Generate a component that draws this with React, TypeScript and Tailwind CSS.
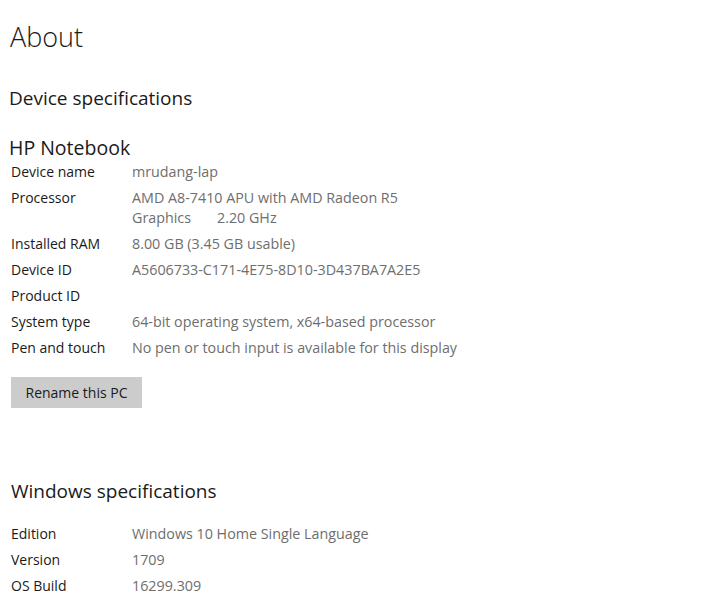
const font = { fontFamily: '"Open Sans", "Noto Sans", sans-serif' };

type Spec = { label: string; value: React.ReactNode };

const deviceSpecs: Spec[] = [
  { label: "Device name", value: "mrudang-lap" },
  {
    label: "Processor",
    value: (
      <>
        AMD A8-7410 APU with AMD Radeon R5
        <br />
        Graphics&nbsp;&nbsp;&nbsp;&nbsp;&nbsp;&nbsp;&nbsp;2.20 GHz
      </>
    ),
  },
  { label: "Installed RAM", value: "8.00 GB (3.45 GB usable)" },
  { label: "Device ID", value: "A5606733-C171-4E75-8D10-3D437BA7A2E5" },
  { label: "Product ID", value: "" },
  { label: "System type", value: "64-bit operating system, x64-based processor" },
  { label: "Pen and touch", value: "No pen or touch input is available for this display" },
];

const windowsSpecs: Spec[] = [
  { label: "Edition", value: "Windows 10 Home Single Language" },
  { label: "Version", value: "1709" },
  { label: "OS Build", value: "16299.309" },
];

function SpecList({ items }: { items: Spec[] }) {
  return (
    <div className="flex flex-col gap-[6px] pl-[11px]">
      {items.map((s) => (
        <div key={s.label} className="flex text-[14px] leading-[20px]">
          <div className="w-[121px] shrink-0 text-[#1a1a1a]">{s.label}</div>
          <div className="text-[#6e6e6e] text-[14.3px] min-h-[20px]">{s.value}</div>
        </div>
      ))}
    </div>
  );
}

export default function App() {
  return (
    <div className="w-[702px] h-[600px] bg-white overflow-hidden" style={font}>
      <h1 className="pl-[10px] pt-[19px] text-[27px] leading-[36px] font-light text-[#1a1a1a]">About</h1>
      <h2 className="pl-[9px] mt-[30px] text-[19px] leading-[26px] text-[#1a1a1a]">Device specifications</h2>
      <h3 className="pl-[9px] mt-[24px] text-[19.5px] leading-[26px] text-[#1a1a1a]">HP Notebook</h3>
      <div className="mt-[1px]">
        <SpecList items={deviceSpecs} />
      </div>
      <div className="pl-[11px] mt-[19px]">
        <button className="w-[131px] h-[31px] bg-[#cccccc] text-[14px] text-[#1a1a1a]">Rename this PC</button>
      </div>
      <h2 className="pl-[11px] mt-[70px] text-[19px] leading-[26px] text-[#1a1a1a]">Windows specifications</h2>
      <div className="mt-[20px]">
        <SpecList items={windowsSpecs} />
      </div>
    </div>
  );
}
